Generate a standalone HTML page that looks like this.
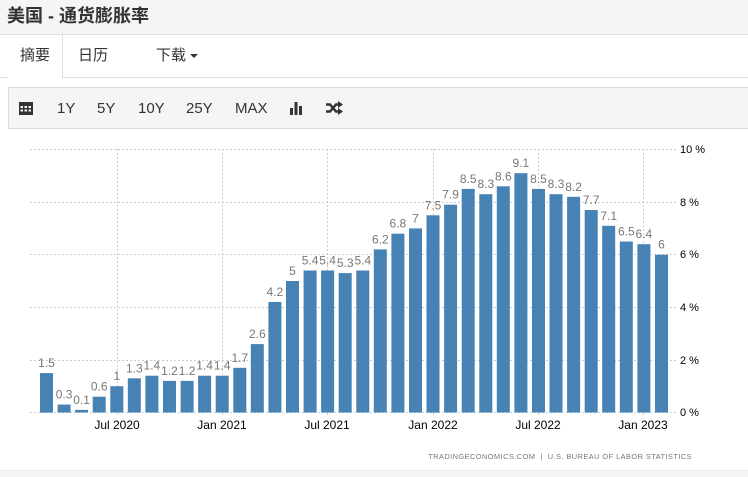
<!DOCTYPE html>
<html><head><meta charset="utf-8"><style>
body{margin:0;width:748px;height:476px;background:#fff;font-family:"Liberation Sans","Noto Sans CJK SC",sans-serif;overflow:hidden;position:relative}
.title{position:absolute;left:0;top:0;width:748px;height:35px;background:#f5f5f5;border-bottom:1px solid #ddd;font-weight:bold;font-size:18px;color:#333;line-height:33px;padding-left:7px;box-sizing:border-box}
.tabs{position:absolute;left:0;top:35px;width:748px;height:42px;border-bottom:1px solid #ddd;font-size:15px;color:#333}
.tab{position:absolute;top:0;height:42px;line-height:42px}
.act{left:8px;width:54px;border-right:1px solid #ddd;background:#fff;height:43px;text-align:center}
.tool{position:absolute;left:8px;top:87px;width:740px;height:42px;background:#f5f5f5;border:1px solid #ddd;border-right:none;box-sizing:border-box;font-size:15px;color:#333}
.tool span{position:absolute;top:12px}
.bot{position:absolute;left:0;top:470px;width:748px;height:6px;background:#f5f5f5;border-top:1px solid #eee}
</style></head><body>
<div class="title">美国 - 通货膨胀率</div>
<div class="tabs">
<div class="tab act">摘要</div>
<div class="tab" style="left:78px">日历</div>
<div class="tab" style="left:156px">下载 <span style="display:inline-block;border-left:4px solid transparent;border-right:4px solid transparent;border-top:4px solid #333;vertical-align:middle"></span></div>
</div>
<div class="tool">
<svg style="position:absolute;left:10px;top:13px" width="14" height="14" viewBox="0 0 14 14"><rect x="0" y="1" width="14" height="13" fill="#333"/><g fill="#f5f5f5"><rect x="1.5" y="5" width="2.5" height="2"/><rect x="5.5" y="5" width="2.5" height="2"/><rect x="9.5" y="5" width="2.5" height="2"/><rect x="1.5" y="8.5" width="2.5" height="2"/><rect x="5.5" y="8.5" width="2.5" height="2"/><rect x="9.5" y="8.5" width="2.5" height="2"/></g></svg>
<span style="left:48px">1Y</span><span style="left:88px">5Y</span><span style="left:129px">10Y</span><span style="left:177px">25Y</span><span style="left:226px">MAX</span>
<svg style="position:absolute;left:281px;top:13px" width="14" height="14" viewBox="0 0 14 14"><rect x="0" y="7" width="3" height="7" fill="#333"/><rect x="4.5" y="1" width="3" height="13" fill="#333"/><rect x="9" y="5" width="3" height="9" fill="#333"/></svg>
<svg style="position:absolute;left:317px;top:13px" width="17" height="14" viewBox="0 0 17 14"><path d="M0 3.5h4l6 7h3M0 10.5h4l6-7h3" stroke="#333" stroke-width="2.4" fill="none"/><path d="M12 0l5 3.5-5 3.5zM12 7l5 3.5-5 3.5z" fill="#333"/></svg>
</div>
<svg style="position:absolute;left:0;top:130px" width="748" height="340" viewBox="0 130 748 340" font-family="Liberation Sans, sans-serif">
<g stroke="#ccc" stroke-dasharray="2,2" stroke-width="1">
<line x1="30" x2="677" y1="149.5" y2="149.5"/><line x1="30" x2="677" y1="202.5" y2="202.5"/><line x1="30" x2="677" y1="254.5" y2="254.5"/><line x1="30" x2="677" y1="307.5" y2="307.5"/><line x1="30" x2="677" y1="360.5" y2="360.5"/><line x1="30" x2="677" y1="412.5" y2="412.5"/>
<line x1="117.5" x2="117.5" y1="149" y2="416"/><line x1="222.5" x2="222.5" y1="149" y2="416"/><line x1="327.5" x2="327.5" y1="149" y2="416"/><line x1="433.5" x2="433.5" y1="149" y2="416"/><line x1="538.5" x2="538.5" y1="149" y2="416"/><line x1="643.5" x2="643.5" y1="149" y2="416"/>
</g>
<g id="bars"></g>
<g font-size="11" fill="#000">
<text x="680" y="153">10 %</text><text x="680" y="206">8 %</text><text x="680" y="258">6 %</text><text x="680" y="311">4 %</text><text x="680" y="364">2 %</text><text x="680" y="416">0 %</text>
</g>
<g font-size="12" fill="#000" text-anchor="middle">
<text x="117" y="429">Jul 2020</text><text x="222" y="429">Jan 2021</text><text x="327" y="429">Jul 2021</text><text x="433" y="429">Jan 2022</text><text x="538" y="429">Jul 2022</text><text x="643" y="429">Jan 2023</text>
</g>
<text x="692" y="459" font-size="7.4" fill="#777" letter-spacing="0.45" text-anchor="end" xml:space="preserve">TRADINGECONOMICS.COM  |  U.S. BUREAU OF LABOR STATISTICS</text>
</svg>
<script>
var v=[1.5,0.3,0.1,0.6,1,1.3,1.4,1.2,1.2,1.4,1.4,1.7,2.6,4.2,5,5.4,5.4,5.3,5.4,6.2,6.8,7,7.5,7.9,8.5,8.3,8.6,9.1,8.5,8.3,8.2,7.7,7.1,6.5,6.4,6];
var g=document.getElementById('bars'),s='';
v.forEach(function(d,i){var x=40+i*17.57,h=d*26.3,y=412.5-h;
s+='<rect x="'+x.toFixed(1)+'" y="'+y.toFixed(1)+'" width="13" height="'+h.toFixed(1)+'" fill="#4682b4"/>';
s+='<text x="'+(x+6.5).toFixed(1)+'" y="'+(y-6).toFixed(1)+'" font-size="12" fill="#777" text-anchor="middle">'+d+'</text>';});
g.innerHTML=s;
</script>
<div class="bot"></div>
</body></html>
